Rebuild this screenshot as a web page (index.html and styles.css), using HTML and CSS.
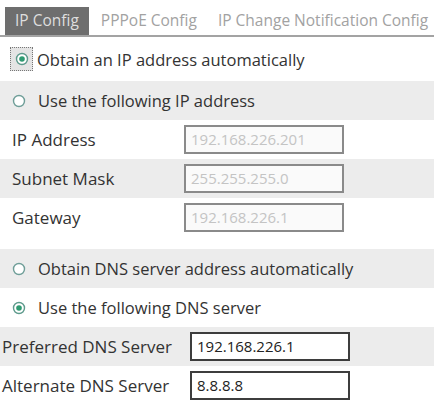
FILE: index.html
```html
<!DOCTYPE html>
<html lang="en">
<head>
    <meta charset="UTF-8">
    <title>IP Config</title>
    <link rel="stylesheet" href="styles.css">
</head>
<body>
    <div class="tabs">
        <span class="tab active">IP Config</span>
        <span class="tab">PPPoE Config</span>
        <span class="tab">IP Change Notification Config</span>
    </div>

    <div class="row first">
        <span class="focus-box">
            <svg class="radio" width="14" height="14" viewBox="0 0 14 14"><circle cx="7" cy="7" r="5.5" fill="#fff" stroke="#5d9a8c" stroke-width="1.4"/><circle cx="7" cy="7" r="2.8" fill="#2f9b72"/></svg>
        </span>
        <span>Obtain an IP address automatically</span>
    </div>
    <div class="row gray">
        <svg class="radio" width="14" height="14" viewBox="0 0 14 14"><circle cx="7" cy="7" r="5.5" fill="#fff" stroke="#6f9e98" stroke-width="1.4"/></svg>
        <span>Use the following IP address</span>
    </div>
    <div class="row field">
        <span class="label">IP Address</span>
        <span class="input disabled">192.168.226.201</span>
    </div>
    <div class="row field gray">
        <span class="label">Subnet Mask</span>
        <span class="input disabled">255.255.255.0</span>
    </div>
    <div class="row field">
        <span class="label">Gateway</span>
        <span class="input disabled">192.168.226.1</span>
    </div>

    <div class="spacer"></div>

    <div class="row gray">
        <svg class="radio" width="14" height="14" viewBox="0 0 14 14"><circle cx="7" cy="7" r="5.5" fill="#fff" stroke="#6f9e98" stroke-width="1.4"/></svg>
        <span>Obtain DNS server address automatically</span>
    </div>
    <div class="row">
        <svg class="radio" width="14" height="14" viewBox="0 0 14 14"><circle cx="7" cy="7" r="5.5" fill="#fff" stroke="#5d9a8c" stroke-width="1.4"/><circle cx="7" cy="7" r="2.8" fill="#2f9b72"/></svg>
        <span>Use the following DNS server</span>
    </div>
    <div class="row field dns gray">
        <span class="label">Preferred DNS Server</span>
        <span class="input">192.168.226.1</span>
    </div>
    <div class="row field dns">
        <span class="label">Alternate DNS Server</span>
        <span class="input">8.8.8.8</span>
    </div>
</body>
</html>
```

FILE: styles.css
```css
/* general */
body {
    margin: 0;
    font-family: 'Open Sans', 'DejaVu Sans', sans-serif;
    font-size: 16.5px;
    color: #333;
    background: #fff;
    width: 434px;
    overflow: hidden;
}

/* tabs */
.tabs {
    display: flex;
    align-items: flex-end;
    gap: 3px;
    height: 37px;
    padding-left: 5px;
    border-bottom: 2px solid #a3a3a3;
    box-sizing: border-box;
}

.tab {
    font-size: 15.5px;
    color: #a2a2a2;
    padding: 0 9px;
    height: 28px;
    line-height: 27px;
    white-space: nowrap;
}

.tab.active {
    background: #6e6e6e;
    color: #dedede;
    padding: 0 10px;
}

/* rows */
.row {
    display: flex;
    align-items: center;
    height: 39px;
    padding-left: 12px;
    white-space: nowrap;
}

.row.first {
    height: 44px;
    padding-left: 10px;
}

.row.gray {
    background: #ececec;
}

.radio {
    flex: none;
    margin-right: 12px;
}

.focus-box {
    display: flex;
    align-items: center;
    justify-content: center;
    width: 23px;
    height: 24px;
    margin-right: 4px;
    background: #e4e4e4;
    border: 1px dotted #777;
    box-sizing: border-box;
}

.focus-box .radio {
    margin-right: 0;
}

.field .label {
    width: 172px;
    flex: none;
    font-size: 17px;
}

.field.dns {
    padding-left: 2px;
}

.field.dns .label {
    width: 188px;
}

.input {
    box-sizing: border-box;
    width: 160px;
    height: 29px;
    line-height: 25px;
    padding-left: 5px;
    border: 2px solid #3d3d3d;
    background: #fff;
    color: #222;
    font-size: 15px;
}

.input.disabled {
    border-color: #8a8a8a;
    background: #fafafa;
    color: #c4c4c4;
}

.spacer {
    height: 12px;
}
```
